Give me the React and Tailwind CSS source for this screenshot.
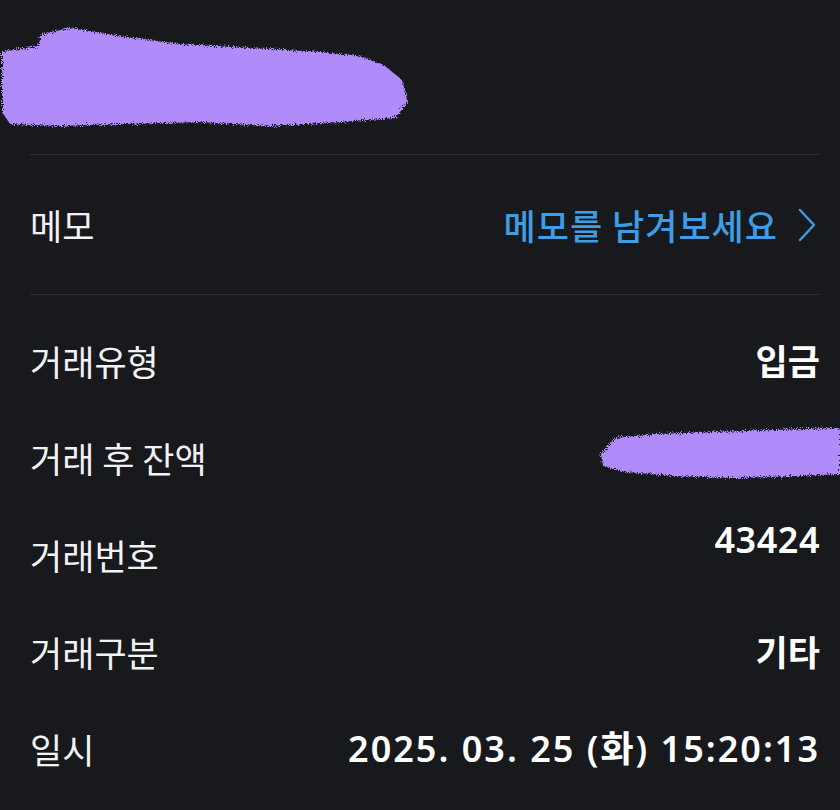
import React from "react";

function Blob({ w, h, d, id }) {
  return (
    <svg width={w} height={h} viewBox={`0 0 ${w} ${h}`} className="block">
      <defs>
        <filter id={id} x="-5%" y="-20%" width="110%" height="140%">
          <feTurbulence type="fractalNoise" baseFrequency="0.9" numOctaves="2" result="n" />
          <feDisplacementMap in="SourceGraphic" in2="n" scale="8" />
        </filter>
      </defs>
      <path d={d} fill="#b08cfb" filter={`url(#${id})`} />
    </svg>
  );
}

const num = { fontFamily: '"Noto Sans", "Noto Sans CJK KR", sans-serif' };

function Row({ label, children, valueClass = "" }) {
  return (
    <div className="flex h-[97px] items-center justify-between">
      <span className="text-[35px] leading-none text-[#f2f2f4]">{label}</span>
      <div className={valueClass}>{children}</div>
    </div>
  );
}

export default function App() {
  return (
    <div
      className="min-h-[810px] w-[840px] bg-[#18191d] text-white"
      style={{ fontFamily: '"Noto Sans CJK KR", "Noto Sans", sans-serif' }}
    >
      <div className="h-[154px] pt-[22px]">
        <Blob
          id="b1"
          w={412}
          h={110}
          d="M2 30 L38 24 L42 12 L70 6 L120 14 L180 22 L250 26 L320 30 L360 34 L385 44 L402 58 L408 80 L395 96 L340 100 L270 104 L200 100 L120 102 L60 104 L10 102 L2 90 Z"
        />
      </div>
      <div className="ml-[30px] mr-[20px] h-px bg-[#2c2d32]" />
      <div className="ml-[30px] mr-[20px] flex h-[139px] items-center justify-between">
        <span className="text-[35px] leading-none text-[#f2f2f4]">메모</span>
        <div className="flex items-center gap-[20px]">
          <span className="text-[35px] font-medium leading-none tracking-[1px] text-[#3d9ee6]">메모를 남겨보세요</span>
          <svg width="18" height="34" viewBox="0 0 18 34" className="mr-[4px]">
            <polyline points="2,2 16,17 2,32" fill="none" stroke="#3d9ee6" strokeWidth="2.4" strokeLinecap="round" strokeLinejoin="round" />
          </svg>
        </div>
      </div>
      <div className="ml-[30px] mr-[20px] h-px bg-[#2c2d32]" />
      <div className="pt-[17px]">
        <div className="ml-[30px] mr-[20px]">
          <Row label="거래유형">
            <span className="text-[35px] font-semibold leading-none">입금</span>
          </Row>
        </div>
        <div className="flex h-[97px] items-center justify-between pl-[30px]">
          <span className="text-[35px] leading-none text-[#f2f2f4]">거래 후 잔액</span>
          <div className="mt-[-8px]">
            <Blob
              id="b2"
              w={245}
              h={60}
              d="M6 30 L20 14 L60 10 L120 8 L180 6 L245 4 L245 50 L200 52 L140 54 L80 52 L30 48 L8 42 Z"
            />
          </div>
        </div>
        <div className="ml-[30px] mr-[20px]">
          <Row label="거래번호" valueClass="pb-[30px]">
            <span className="text-[36px] font-semibold leading-none tracking-[0.5px]" style={num}>43424</span>
          </Row>
          <Row label="거래구분">
            <span className="text-[35px] font-semibold leading-none">기타</span>
          </Row>
          <Row label="일시">
            <span className="text-[36px] font-semibold leading-none tracking-[2px]" style={num}>2025. 03. 25 (화) 15:20:13</span>
          </Row>
        </div>
      </div>
    </div>
  );
}
